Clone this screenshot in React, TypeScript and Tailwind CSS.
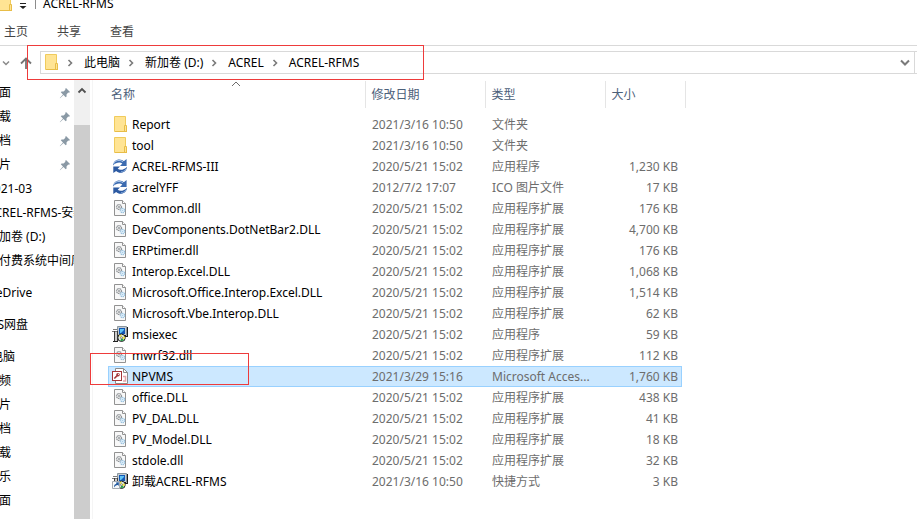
import clsx from "clsx";

type IconKind = "folder" | "sync" | "dll" | "installer" | "access" | "shortcut";

type FileRow = {
  name: string;
  date: string;
  type: string;
  size?: string;
  icon: IconKind;
  selected?: boolean;
};

type NavItem = { label: string; pinned?: boolean };
type NavGroup = { title?: string; items: NavItem[] };

const files: FileRow[] = [
  { name: "Report", date: "2021/3/16 10:50", type: "文件夹", icon: "folder" },
  { name: "tool", date: "2021/3/16 10:50", type: "文件夹", icon: "folder" },
  { name: "ACREL-RFMS-III", date: "2020/5/21 15:02", type: "应用程序", size: "1,230 KB", icon: "sync" },
  { name: "acrelYFF", date: "2012/7/2 17:07", type: "ICO 图片文件", size: "17 KB", icon: "sync" },
  { name: "Common.dll", date: "2020/5/21 15:02", type: "应用程序扩展", size: "176 KB", icon: "dll" },
  { name: "DevComponents.DotNetBar2.DLL", date: "2020/5/21 15:02", type: "应用程序扩展", size: "4,700 KB", icon: "dll" },
  { name: "ERPtimer.dll", date: "2020/5/21 15:02", type: "应用程序扩展", size: "176 KB", icon: "dll" },
  { name: "Interop.Excel.DLL", date: "2020/5/21 15:02", type: "应用程序扩展", size: "1,068 KB", icon: "dll" },
  { name: "Microsoft.Office.Interop.Excel.DLL", date: "2020/5/21 15:02", type: "应用程序扩展", size: "1,514 KB", icon: "dll" },
  { name: "Microsoft.Vbe.Interop.DLL", date: "2020/5/21 15:02", type: "应用程序扩展", size: "62 KB", icon: "dll" },
  { name: "msiexec", date: "2020/5/21 15:02", type: "应用程序", size: "59 KB", icon: "installer" },
  { name: "mwrf32.dll", date: "2020/5/21 15:02", type: "应用程序扩展", size: "112 KB", icon: "dll" },
  { name: "NPVMS", date: "2021/3/29 15:16", type: "Microsoft Acces...", size: "1,760 KB", icon: "access", selected: true },
  { name: "office.DLL", date: "2020/5/21 15:02", type: "应用程序扩展", size: "438 KB", icon: "dll" },
  { name: "PV_DAL.DLL", date: "2020/5/21 15:02", type: "应用程序扩展", size: "41 KB", icon: "dll" },
  { name: "PV_Model.DLL", date: "2020/5/21 15:02", type: "应用程序扩展", size: "18 KB", icon: "dll" },
  { name: "stdole.dll", date: "2020/5/21 15:02", type: "应用程序扩展", size: "32 KB", icon: "dll" },
  { name: "卸载ACREL-RFMS", date: "2021/3/16 10:50", type: "快捷方式", size: "3 KB", icon: "shortcut" },
];

const navGroups: NavGroup[] = [
  {
    items: [
      { label: "桌面", pinned: true },
      { label: "下载", pinned: true },
      { label: "文档", pinned: true },
      { label: "图片", pinned: true },
      { label: "2021-03" },
      { label: "ACREL-RFMS-安装" },
      { label: "新加卷 (D:)" },
      { label: "预付费系统中间库" },
    ],
  },
  { title: "OneDrive", items: [] },
  { title: "WPS网盘", items: [] },
  {
    title: "此电脑",
    items: [
      { label: "视频" },
      { label: "图片" },
      { label: "文档" },
      { label: "下载" },
      { label: "音乐" },
      { label: "桌面" },
    ],
  },
];

const crumbs = ["此电脑", "新加卷 (D:)", "ACREL", "ACREL-RFMS"];
const tabs = ["主页", "共享", "查看"];

function FolderIcon() {
  return (
    <svg width="16" height="17" viewBox="0 0 16 17" className="shrink-0">
      <path d="M2.500 0.500h11v15h-11z" fill="#ffe494" stroke="#f0cb5c" />
      <path d="M12.500 9.500h2v6h-2z" fill="#ffe494" stroke="#e8bd48" />
      <path d="M3 15.500h12" stroke="#e8bd48" />
    </svg>
  );
}

function SyncIcon() {
  return (
    <svg width="16" height="17" viewBox="0 0 16 17" className="shrink-0">
      <path d="M1 7.500C1.300 3.800 4 1.500 7.300 1.500c2 0 3.400.7 4.500 1.800L14.600 1v7H8l2.300-2.400C9.400 4.800 8.400 4.500 7.300 4.500 5 4.500 3 5.300 1 7.500z" fill="#3c6bb0" />
      <path d="M1.500 6C2.600 3.700 4.500 2.400 7 2.400c1.500 0 2.900.5 4 1.500" fill="none" stroke="#a9c6ea" />
      <path d="M15 8.700c-.3 3.700-3 6-6.300 6-2 0-3.400-.7-4.500-1.800L1.300 15V8.500H8l-2.300 2.200c.9.800 1.900 1.100 3 1.100C11 11.800 13 10.900 15 8.700z" fill="#2c5aa2" />
      <path d="M14 11c-1.200 1.900-3 2.800-5 2.800" fill="none" stroke="#86abdc" />
    </svg>
  );
}

function DllIcon() {
  return (
    <svg width="16" height="17" viewBox="0 0 16 17" className="shrink-0">
      <path d="M2.500.5h8l3 3v12h-11z" fill="#f8f8f8" stroke="#929292" />
      <path d="M10.500.5v3h3" fill="#fff" stroke="#929292" />
      <circle cx="7" cy="7" r="2.500" fill="#e4e4e4" stroke="#8d9296" strokeWidth="1.200" strokeDasharray="1.300 .5" />
      <circle cx="7" cy="7" r="1" fill="#9ba0a4" />
      <circle cx="10.500" cy="10.500" r="2.200" fill="#e3f1fb" stroke="#93bddb" strokeWidth="1.200" strokeDasharray="1.200 .6" />
      <circle cx="10.500" cy="10.500" r=".8" fill="#a9cde6" />
    </svg>
  );
}

function InstallerIcon({ shortcut }: { shortcut?: boolean }) {
  return (
    <svg width="16" height="17" viewBox="0 0 16 17" className="shrink-0">
      {/* monitor */}
      <path d="M5.500.5h9v9h-9z" fill="#c3ccd2" stroke="#8b969e" />
      <path d="M15 1h1v10h-3v-1h2zM6 9h8v1H6z" fill="#1d1d1d" />
      <path d="M7 2h6v6H7z" fill="#1257b5" />
      <path d="M8 3h4v1L9 7H8z" fill="#5fc3f6" />
      {/* box */}
      <path d="M2 6h4v9H2z" fill="#f2f2f2" />
      <path d="M0 5.500h5M1 3.500h4" stroke="#7c7c7c" />
      <path d="M2.500 5v10M5.500 5v10" stroke="#3c3c3c" />
      <path d="M4 6v9" stroke="#a8a8a8" />
      <path d="M1 15.500h5" stroke="#222" />
      {/* disc */}
      <circle cx="9.500" cy="11.800" r="3.700" fill="#dfe8e2" stroke="#1d1d1d" />
      <path d="M9.500 11.800L7 9.700a3.200 3.200 0 0 1 2.500-1.100z" fill="#e7e04a" />
      <path d="M9.500 11.800l2.400 2.200a3.200 3.200 0 0 1-3.500.8z" fill="#27a44b" />
      <path d="M9.500 11.800l2.900-1.500a3.200 3.200 0 0 1 0 3z" fill="#f5ec3c" />
      <circle cx="9.500" cy="11.800" r="1" fill="#fff" stroke="#333" strokeWidth=".5" />
      {shortcut && (
        <>
          <path d="M.5 8.500h7v7h-7z" fill="#f6f9fc" stroke="#a5abb2" />
          <path d="M2 14.500c-.2-2 .6-3.300 2.200-3.500V9.500h-1l3.600-.2v3.600l-1-1C4 12 3 13 2 14.500z" fill="#22599f" />
        </>
      )}
    </svg>
  );
}

function AccessIcon() {
  return (
    <svg width="16" height="17" viewBox="0 0 16 17" className="shrink-0">
      <path d="M3.500.5h8l4 4v11h-12z" fill="#fff" stroke="#8c8c8c" />
      <path d="M11.500.5v4h4" fill="none" stroke="#8c8c8c" />
      <path d="M11 8.500h2.500v4.500H11" fill="none" stroke="#e3a3a8" strokeWidth="1.500" />
      <path d="M0 3h10v10H0z" fill="#a4373a" />
      <path d="M1 4h8v8H1z" fill="#fff" />
      <circle cx="6" cy="6.800" r="1.800" fill="#a4373a" />
      <circle cx="6.500" cy="6.300" r=".6" fill="#fff" />
      <path d="M5.200 7.600L2.300 10.500" stroke="#a4373a" strokeWidth="1.500" />
    </svg>
  );
}

function FileIcon({ kind }: { kind: IconKind }) {
  switch (kind) {
    case "folder":
      return <FolderIcon />;
    case "sync":
      return <SyncIcon />;
    case "dll":
      return <DllIcon />;
    case "access":
      return <AccessIcon />;
    default:
      return <InstallerIcon shortcut={kind === "shortcut"} />;
  }
}

function PinIcon() {
  return (
    <svg width="12" height="12" viewBox="0 0 12 12" className="shrink-0">
      <path d="M7 1l4 4-1 .8-.8-.2L7.500 7.400l.1 2-.9.8L4.500 8 1 11.200.8 11 4 7.500 1.800 5.300l.8-.9 2 .1L6.400 2.800 6.200 2z" fill="#8a99a5" />
    </svg>
  );
}

function CrumbArrow() {
  return (
    <svg width="25" height="10" viewBox="0 0 25 10" className="shrink-0">
      <path d="M9.500 2l3 3-3 3" fill="none" stroke="#7a7a7a" strokeWidth="1.600" />
    </svg>
  );
}

function TitleBar() {
  return (
    <div className="flex h-3 items-end overflow-hidden">
      <div className="-ml-[3px] flex h-[17px] items-center">
        <FolderIcon />
      </div>
      <svg width="22" height="12" viewBox="0 0 22 12" className="shrink-0">
        <path d="M7 3.500h6" stroke="#222" />
        <path d="M6.500 6h7L10 9z" fill="#222" />
      </svg>
      <span className="mb-[3px] h-3 w-px bg-[#8c8c8c]" />
      <h1 className="ml-[7px] text-xs leading-4 text-black">ACREL-RFMS</h1>
    </div>
  );
}

function AddressBar() {
  return (
    <div className="flex items-center pt-[5px] pb-[6px]">
      <button type="button" aria-label="最近位置" className="flex h-[23px] w-3 items-center justify-center">
        <svg width="8" height="6" viewBox="0 0 8 6">
          <path d="M1 1.500l3 3 3-3" fill="none" stroke="#8a8a8a" strokeWidth="1.500" />
        </svg>
      </button>
      <button type="button" aria-label="上移" className="flex h-[23px] w-7 items-center justify-center">
        <svg width="12" height="12" viewBox="0 0 12 12">
          <path d="M6 12V2M1 6.500L6 1.500l5 5" fill="none" stroke="#757575" strokeWidth="1.800" />
        </svg>
      </button>
      <div className="flex h-[23px] flex-1 items-center border border-[#d9d9d9] pl-[2px]">
        <FolderIcon />
        {crumbs.map((crumb) => (
          <div key={crumb} className="flex items-center">
            <CrumbArrow />
            <a href="#" className="text-xs text-black">{crumb}</a>
          </div>
        ))}
        <button type="button" aria-label="展开地址" className="ml-auto flex h-full w-[19px] items-center justify-center">
          <svg width="10" height="8" viewBox="0 0 10 8">
            <path d="M1 1.500l4 4 4-4" fill="none" stroke="#7a7a7a" strokeWidth="2" />
          </svg>
        </button>
      </div>
      <div className="h-[23px] w-[2px] border-y border-[#d9d9d9]" />
    </div>
  );
}

function Sidebar() {
  return (
    <nav className="w-[74px] shrink-0 overflow-hidden pt-px">
      <div className="-ml-6 flex flex-col gap-2">
        {navGroups.map((group, i) => (
          <ul key={i}>
            {group.title && (
              <li className="flex h-6 items-center pl-[3px] whitespace-nowrap">{group.title}</li>
            )}
            {group.items.map((item) => (
              <li key={item.label} className="flex h-6 items-center justify-between pr-[3px] pl-[11px] whitespace-nowrap">
                {item.label}
                {item.pinned && <PinIcon />}
              </li>
            ))}
          </ul>
        ))}
      </div>
    </nav>
  );
}

function ScrollBar() {
  return (
    <div className="flex w-4 shrink-0 flex-col bg-[#f0f0f0]">
      <div className="flex h-[45px] justify-center pt-[7px]">
        <svg width="10" height="7" viewBox="0 0 10 7">
          <path d="M1.500 5.500L5 2l3.500 3.500" fill="none" stroke="#505050" strokeWidth="1.800" />
        </svg>
      </div>
      <div className="flex-1 bg-[#cdcdcd]" />
    </div>
  );
}

function FileTable() {
  const head = "h-[27px] border-r border-[#e5e5e5] pl-[6px] text-left font-normal";
  const cell = "flex h-[21px] items-center border-y whitespace-nowrap";
  return (
    <table className="mt-px w-[577px] table-fixed">
      <thead>
        <tr className="text-[#4c607a]">
          <th className="relative h-[27px] w-[257px] border-r border-[#e5e5e5] pl-[3px] text-left font-normal">
            名称
            <svg width="10" height="6" viewBox="0 0 10 6" className="absolute top-0 left-1/2 -translate-x-1/2">
              <path d="M1 5l4-4 4 4" fill="none" stroke="#6d6d6d" />
            </svg>
          </th>
          <th className={clsx(head, "w-[120px]")}>修改日期</th>
          <th className={clsx(head, "w-[120px]")}>类型</th>
          <th className={clsx(head, "w-[80px]")}>大小</th>
        </tr>
      </thead>
      <tbody>
        <tr aria-hidden="true">
          <td colSpan={4} className="h-[6px] p-0" />
        </tr>
        {files.map((file) => {
          const tone = file.selected ? "border-[#99d1ff] bg-[#cce8ff]" : "border-transparent";
          return (
            <tr key={file.name} className="text-[#6d6d6d]">
              <td className="p-0">
                <div className={clsx(cell, tone, "gap-1 border-l pl-[3px] text-black")}>
                  <FileIcon kind={file.icon} />
                  {file.name}
                </div>
              </td>
              <td className="p-0">
                <div className={clsx(cell, tone, "pl-[7px]")}>{file.date}</div>
              </td>
              <td className="p-0">
                <div className={clsx(cell, tone, "pl-[7px]")}>{file.type}</div>
              </td>
              <td className="p-0">
                <div className={clsx(cell, tone, "mr-[3px] justify-end border-r pr-[3px]")}>{file.size}</div>
              </td>
            </tr>
          );
        })}
      </tbody>
    </table>
  );
}

export default function App() {
  return (
    <div className="relative flex h-screen flex-col overflow-hidden bg-white font-['Noto_Sans','Noto_Sans_CJK_SC',sans-serif] text-xs text-black">
      <TitleBar />
      <div className="flex h-[34px] items-center gap-[29px] border-b border-[#d9d9d9] pt-[6px] pl-1 text-[#444]">
        {tabs.map((tab) => (
          <button key={tab} type="button">{tab}</button>
        ))}
      </div>
      <AddressBar />

      <div className="flex min-h-0 flex-1">
        <Sidebar />
        <ScrollBar />
        <main className="ml-[2px] flex-1 overflow-hidden border-l border-[#f5f5f5] pl-[15px]">
          <FileTable />
        </main>
      </div>

      {/* red callouts over the path and the database file */}
      <div className="pointer-events-none absolute top-[45px] left-[27px] h-[35px] w-[397px] border border-[#ee3b3b]" />
      <div className="pointer-events-none absolute top-[353px] left-[90px] h-[32px] w-[159px] border border-[#ee3b3b]" />
    </div>
  );
}
